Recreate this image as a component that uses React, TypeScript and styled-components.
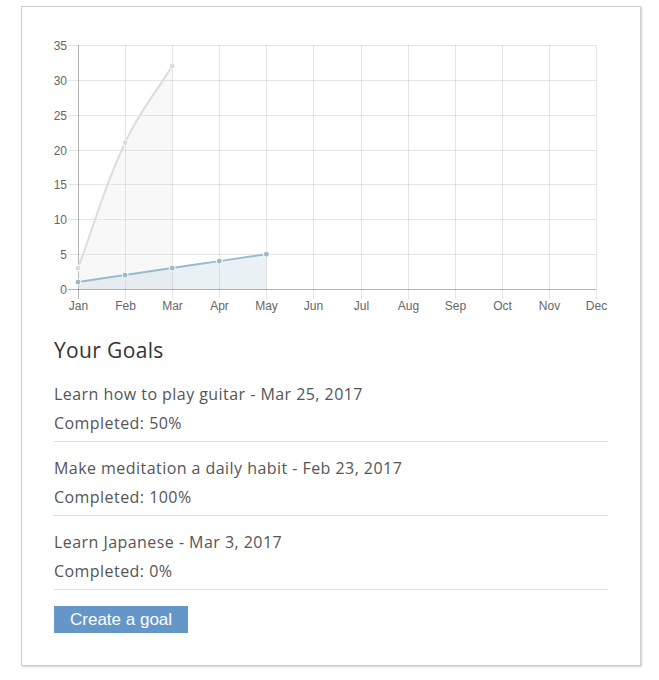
import React from "react";
import styled, { createGlobalStyle } from "styled-components";

const GlobalStyle = createGlobalStyle`
  html, body { margin: 0; padding: 0; background: #fff; }
  body { font-family: "Open Sans", "Liberation Sans", sans-serif; }
`;

const Page = styled.div`
  padding: 6px 18px 14px 21px;
`;

const Card = styled.div`
  width: 620px;
  box-sizing: border-box;
  border: 1px solid #cfcfcf;
  box-shadow: 1px 1px 2px rgba(0, 0, 0, 0.18);
  background: #fff;
  padding: 24px 32px 32px 32px;
`;

const ChartSvg = styled.svg`
  display: block;
  width: 554px;
  height: 290px;
  font-family: "Liberation Sans", Arial, sans-serif;
`;

const Heading = styled.h2`
  margin: 17px 0 6px 0;
  font-size: 21px;
  line-height: 24px;
  font-weight: 400;
  color: #333;
  letter-spacing: 0.35px;
`;

const GoalList = styled.ul`
  list-style: none;
  margin: 0;
  padding: 0;
`;

const GoalItem = styled.li`
  display: flex;
  flex-direction: column;
  gap: 9px;
  padding: 16px 0 8px 0;
  border-bottom: 1px solid #dedede;
`;

const GoalLine = styled.div`
  font-size: 16px;
  line-height: 20px;
  color: #555;
  letter-spacing: 0.45px;
`;

const CreateButton = styled.button`
  margin-top: 16px;
  display: block;
  border: none;
  border-radius: 0;
  background: #6496c8;
  color: #fff;
  font-family: "Liberation Sans", Arial, sans-serif;
  font-size: 17px;
  line-height: 19px;
  padding: 4px 16px 4px 16px;
  cursor: pointer;
`;

const months = ["Jan", "Feb", "Mar", "Apr", "May", "Jun", "Jul", "Aug", "Sep", "Oct", "Nov", "Dec"];
const X0 = 24;
const X1 = 542;
const Y0 = 258;
const YTOP = 14;
const MAXV = 35;
const xAt = (i: number) => X0 + (i * (X1 - X0)) / 11;
const yAt = (v: number) => Y0 - (v * (Y0 - YTOP)) / MAXV;

type Pt = { x: number; y: number };

function splinePath(pts: Pt[], t = 0.4): string {
  const n = pts.length;
  const cps = pts.map((cur, i) => {
    const prev = i > 0 ? pts[i - 1] : cur;
    const next = i < n - 1 ? pts[i + 1] : cur;
    const d01 = Math.hypot(cur.x - prev.x, cur.y - prev.y);
    const d12 = Math.hypot(next.x - cur.x, next.y - cur.y);
    const tot = d01 + d12 || 1;
    const fa = (t * d01) / tot;
    const fb = (t * d12) / tot;
    return {
      p: { x: cur.x - fa * (next.x - prev.x), y: cur.y - fa * (next.y - prev.y) },
      n: { x: cur.x + fb * (next.x - prev.x), y: cur.y + fb * (next.y - prev.y) },
    };
  });
  let d = `M${pts[0].x},${pts[0].y}`;
  for (let i = 1; i < n; i++) {
    const a = cps[i - 1].n;
    const b = cps[i].p;
    d += ` C${a.x},${a.y} ${b.x},${b.y} ${pts[i].x},${pts[i].y}`;
  }
  return d;
}

const grayData = [3, 21, 32];
const blueData = [1, 2, 3, 4, 5];

const grayPts = grayData.map((v, i) => ({ x: xAt(i), y: yAt(v) }));
const bluePts = blueData.map((v, i) => ({ x: xAt(i), y: yAt(v) }));

const grayLine = splinePath(grayPts);
const grayFill = `${grayLine} L${grayPts[grayPts.length - 1].x},${Y0} L${grayPts[0].x},${Y0} Z`;
const blueLine = splinePath(bluePts);
const blueFill = `${blueLine} L${bluePts[bluePts.length - 1].x},${Y0} L${bluePts[0].x},${Y0} Z`;

const Chart: React.FC = () => {
  const yTicks = [0, 5, 10, 15, 20, 25, 30, 35];
  return (
    <ChartSvg viewBox="0 0 554 290">
      {yTicks.map((v) => {
        const y = Math.round(yAt(v)) + 0.5;
        return (
          <g key={v}>
            <line
              x1={X0 - 10}
              x2={X1}
              y1={y}
              y2={y}
              stroke={v === 0 ? "rgba(0,0,0,0.3)" : "rgba(0,0,0,0.1)"}
              strokeWidth={1}
            />
            <text x={X0 - 11} y={y} fontSize={12} fill="#666" textAnchor="end" dominantBaseline="central">
              {v}
            </text>
          </g>
        );
      })}
      {months.map((m, i) => {
        const x = Math.round(xAt(i)) + 0.5;
        return (
          <g key={m}>
            <line
              x1={x}
              x2={x}
              y1={YTOP}
              y2={Y0 + 10}
              stroke={i === 0 ? "rgba(0,0,0,0.3)" : "rgba(0,0,0,0.1)"}
              strokeWidth={1}
            />
            <text x={x} y={Y0 + 17} fontSize={12} fill="#666" textAnchor="middle" dominantBaseline="central">
              {m}
            </text>
          </g>
        );
      })}
      <path d={blueFill} fill="rgba(151,187,205,0.2)" />
      <path d={grayFill} fill="rgba(220,220,220,0.2)" />
      <path d={blueLine} fill="none" stroke="rgb(151,187,205)" strokeWidth={2} />
      <path d={grayLine} fill="none" stroke="rgb(220,220,220)" strokeWidth={2} />
      {bluePts.map((p, i) => (
        <circle key={`b${i}`} cx={p.x} cy={p.y} r={3} fill="rgb(151,187,205)" stroke="#fff" strokeWidth={1} />
      ))}
      {grayPts.map((p, i) => (
        <circle key={`g${i}`} cx={p.x} cy={p.y} r={3} fill="rgb(220,220,220)" stroke="#fff" strokeWidth={1} />
      ))}
    </ChartSvg>
  );
};

const goals = [
  { title: "Learn how to play guitar - Mar 25, 2017", completed: 50 },
  { title: "Make meditation a daily habit - Feb 23, 2017", completed: 100 },
  { title: "Learn Japanese - Mar 3, 2017", completed: 0 },
];

export default function App() {
  return (
    <>
      <GlobalStyle />
      <Page>
        <Card>
          <Chart />
          <Heading>Your Goals</Heading>
          <GoalList>
            {goals.map((g) => (
              <GoalItem key={g.title}>
                <GoalLine>{g.title}</GoalLine>
                <GoalLine>Completed: {g.completed}%</GoalLine>
              </GoalItem>
            ))}
          </GoalList>
          <CreateButton>Create a goal</CreateButton>
        </Card>
      </Page>
    </>
  );
}
